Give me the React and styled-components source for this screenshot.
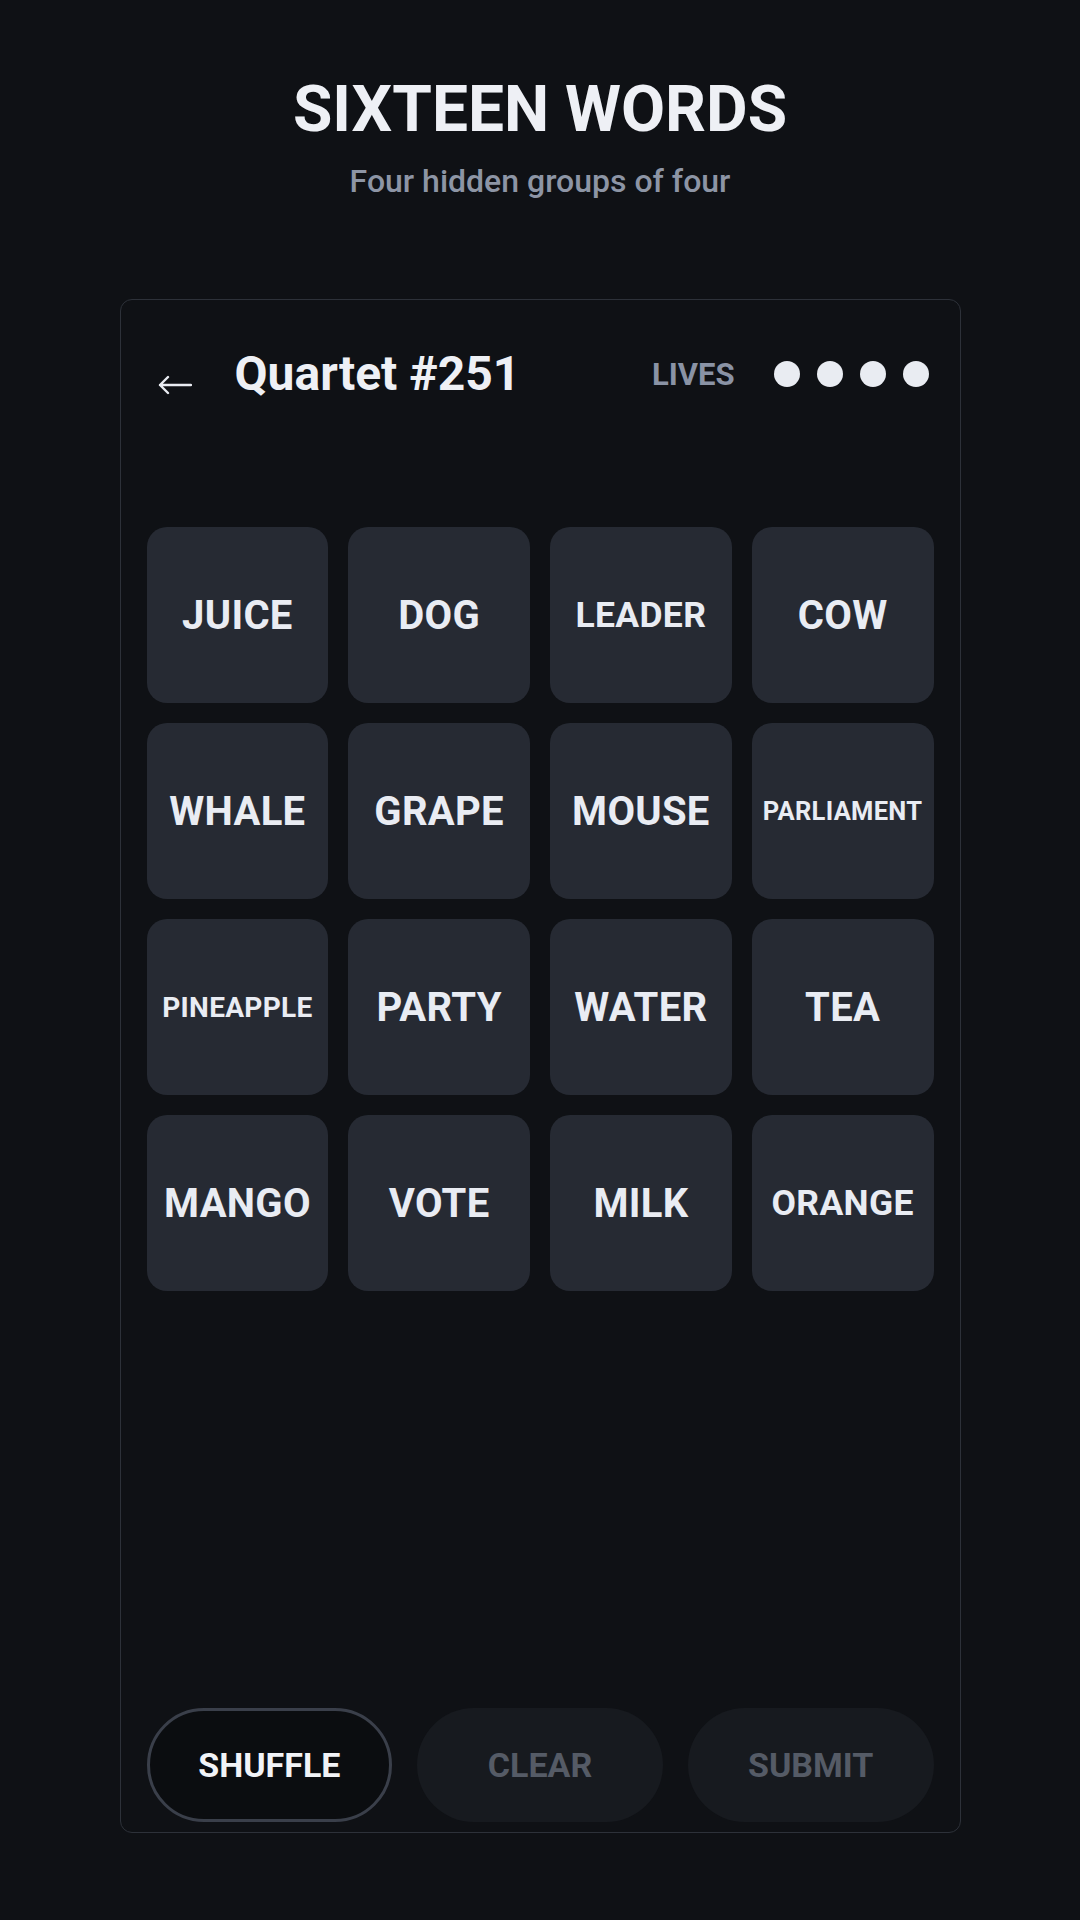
import styled, { createGlobalStyle } from 'styled-components';

const GlobalStyle = createGlobalStyle`
  html, body {
    margin: 0;
    padding: 0;
    background: #0f1115;
  }
  body {
    font-family: Roboto, 'Liberation Sans', Arial, sans-serif;
    color: #eef0f5;
  }
  * {
    box-sizing: border-box;
  }
`;

const Page = styled.main`
  min-height: 1920px;
  display: flex;
  flex-direction: column;
  align-items: center;
  padding-top: 72px;
`;

const Title = styled.h1`
  margin: 0;
  font-size: 64px;
  line-height: 1.2;
  font-weight: 700;
  color: #eef0f5;
`;

const Subtitle = styled.p`
  margin: 13px 0 0;
  font-size: 32px;
  line-height: 1.2;
  font-weight: 500;
  color: #8d95a5;
`;

const Card = styled.section`
  margin-top: 99px;
  width: 841px;
  height: 1534px;
  border: 1px solid #2d3139;
  border-radius: 12px;
  padding: 45px 26px 10px;
  display: flex;
  flex-direction: column;
`;

const Header = styled.header`
  height: 58px;
  display: flex;
  align-items: center;
  padding: 0 5px 0 11px;
`;

const Back = styled.button`
  border: 0;
  background: none;
  padding: 0;
  margin: 22px 43px 0 0;
  display: flex;
  color: #e9ecf2;
  cursor: pointer;
`;

const PuzzleName = styled.h2`
  margin: 0;
  font-size: 48px;
  line-height: 1.2;
  font-weight: 700;
  color: #eef0f5;
`;

const Lives = styled.div`
  margin-left: auto;
  display: flex;
  align-items: center;
`;

const LivesLabel = styled.span`
  font-size: 31px;
  line-height: 1.2;
  font-weight: 700;
  color: #8a93a5;
  margin-right: 39px;
`;

const Dots = styled.div`
  display: flex;
  gap: 17px;
`;

const Dot = styled.span`
  width: 26px;
  height: 26px;
  border-radius: 50%;
  background: ${({ $used }) => ($used ? '#2b2f37' : '#e9ecf2')};
`;

const Grid = styled.div`
  margin-top: 124px;
  display: grid;
  grid-template-columns: repeat(4, 1fr);
  grid-auto-rows: 176px;
  gap: 20px;
`;

const Tile = styled.button`
  border: 0;
  border-radius: 20px;
  background: #262a33;
  color: #e9ecf3;
  font-family: inherit;
  font-weight: 700;
  font-size: ${({ $size }) => $size}px;
  letter-spacing: 0.3px;
  display: flex;
  align-items: center;
  justify-content: center;
  padding: 0;
  cursor: pointer;
`;

const Actions = styled.div`
  margin-top: auto;
  display: grid;
  grid-template-columns: repeat(3, 1fr);
  gap: 25px;
`;

const Action = styled.button`
  height: 114px;
  border-radius: 57px;
  font-family: inherit;
  font-size: 34px;
  font-weight: 700;
  cursor: pointer;
  border: ${({ $outline }) => ($outline ? '3px solid #3a3f4a' : '0')};
  background: ${({ $outline }) => ($outline ? '#0b0d10' : '#171a1f')};
  color: ${({ $outline }) => ($outline ? '#f1f3f7' : '#555b66')};
`;

const words = [
  'JUICE', 'DOG', 'LEADER', 'COW',
  'WHALE', 'GRAPE', 'MOUSE', 'PARLIAMENT',
  'PINEAPPLE', 'PARTY', 'WATER', 'TEA',
  'MANGO', 'VOTE', 'MILK', 'ORANGE',
];

const sizeFor = (word) => {
  if (word.length >= 10) return 25.5;
  if (word.length >= 8) return 28;
  if (word.length >= 6) return 35.5;
  return 40;
};

const ArrowLeft = () => (
  <svg width="34" height="20" viewBox="0 0 34 20" fill="none">
    <path d="M33 10H2M10 2L2 10L10 18" stroke="currentColor" strokeWidth="2.4" strokeLinecap="round" strokeLinejoin="round" />
  </svg>
);

const App = () => {
  const lives = 4;

  return (
    <>
      <GlobalStyle />
      <Page>
        <Title>SIXTEEN WORDS</Title>
        <Subtitle>Four hidden groups of four</Subtitle>
        <Card>
          <Header>
            <Back aria-label="Back">
              <ArrowLeft />
            </Back>
            <PuzzleName>Quartet #251</PuzzleName>
            <Lives>
              <LivesLabel>LIVES</LivesLabel>
              <Dots>
                {[0, 1, 2, 3].map((i) => (
                  <Dot key={i} $used={i >= lives} />
                ))}
              </Dots>
            </Lives>
          </Header>
          <Grid>
            {words.map((w) => (
              <Tile key={w} $size={sizeFor(w)}>
                {w}
              </Tile>
            ))}
          </Grid>
          <Actions>
            <Action $outline>SHUFFLE</Action>
            <Action disabled>CLEAR</Action>
            <Action disabled>SUBMIT</Action>
          </Actions>
        </Card>
      </Page>
    </>
  );
};

export default App;
